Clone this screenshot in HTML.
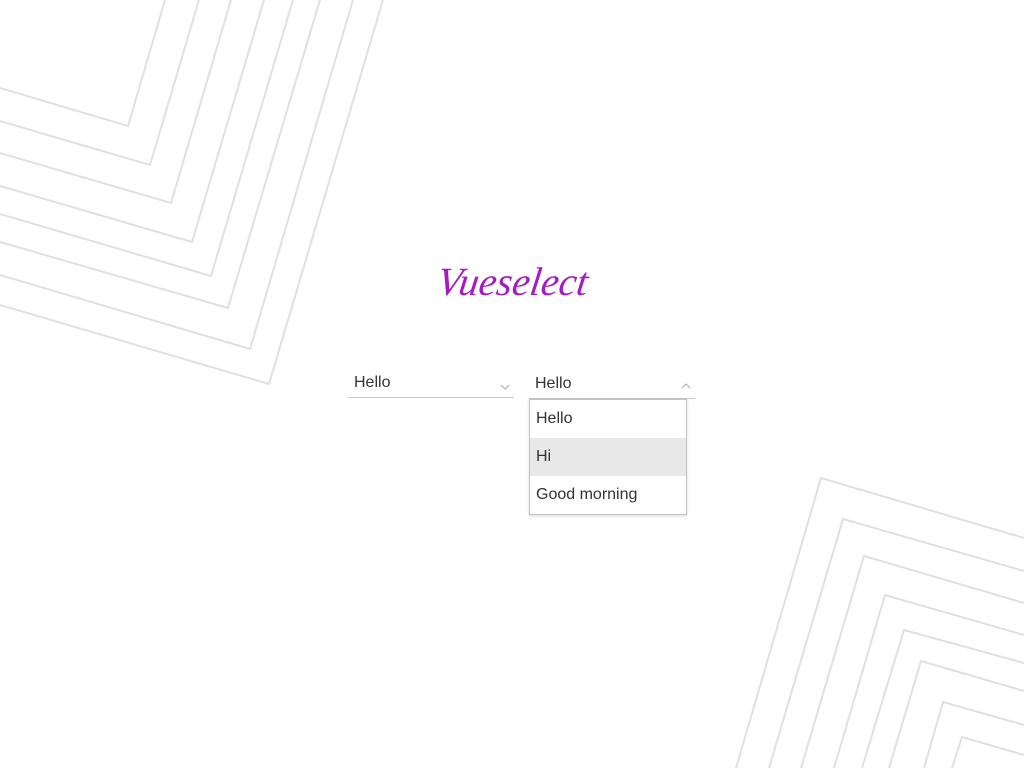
<!DOCTYPE html>
<html><head><style>
body{margin:0;width:1024px;height:768px;background:#fff;position:relative;overflow:hidden;font-family:"Liberation Sans",Arial,sans-serif;}
svg.bg{position:absolute;left:0;top:0}
.logo{position:absolute;left:428px;top:258px;width:170px;text-align:center;font-family:"Liberation Serif",serif;font-style:italic;font-size:40px;color:#a41bc4;letter-spacing:0px;transform:skewX(-8deg)}
.sel{position:absolute;top:370px;height:27px;border-bottom:1px solid #c8c8c8;font-size:16px;color:#333}
.sel span{position:absolute;left:6px;top:4px}
.dd{position:absolute;left:529px;top:399px;width:156px;height:114px;border:1px solid #c4c4c4;background:#fff;box-shadow:0 1px 3px rgba(0,0,0,.15)}
.dd div{height:38px;line-height:38px;padding-left:6px;font-size:16px;color:#333}
</style></head><body>
<svg class="bg" width="1024" height="768" fill="none" stroke="#e0e0e0" stroke-width="2">
<polyline points="165,0 128,126 0,88"/>
<polyline points="199,0 150,165 0,121"/>
<polyline points="231,0 171,203 0,153"/>
<polyline points="264,0 192,242 0,186"/>
<polyline points="293,0 211,276 0,214"/>
<polyline points="320,0 228,308 0,242"/>
<polyline points="353,0 250,349 0,275"/>
<polyline points="383,0 269,384 0,305"/>
<polyline points="736,768 821,478 1024,538"/>
<polyline points="769,768 843,519 1024,571"/>
<polyline points="801,768 864,556 1024,603"/>
<polyline points="834,768 885,595 1024,635"/>
<polyline points="862,768 904,630 1024,663"/>
<polyline points="889,768 921,661 1024,691"/>
<polyline points="924,768 943,702 1024,725"/>
<polyline points="952,768 962,737 1024,755"/>
<polyline points="501,385 505,389 509,385" stroke="#aaa" stroke-width="1"/>
<polyline points="682,388 686,384 690,388" stroke="#aaa" stroke-width="1"/>
</svg>
<div class="logo">Vueselect</div>
<div class="sel" style="left:348px;width:166px"><span>Hello</span></div>
<div class="sel" style="left:529px;width:166px;top:371px"><span>Hello</span></div>
<div class="dd"><div>Hello</div><div style="background:#e8e8e8">Hi</div><div>Good morning</div></div>
</body></html>
